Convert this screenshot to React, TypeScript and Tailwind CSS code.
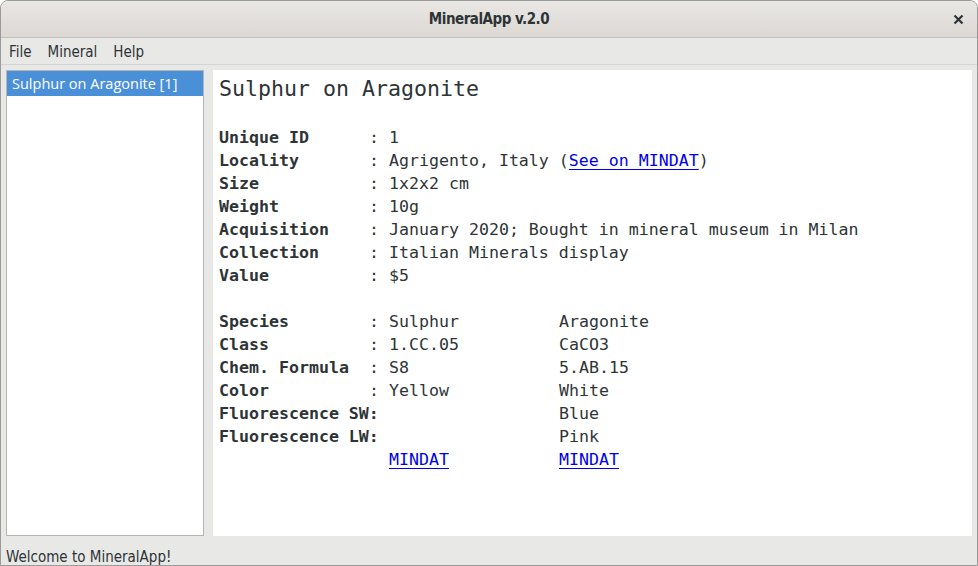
import React from "react";

const mono = { fontFamily: '"DejaVu Sans Mono", "Liberation Mono", monospace' };
const ui = { fontFamily: '"DejaVu Sans Condensed", "Liberation Sans Narrow", "Liberation Sans", sans-serif' };

type Row = { label: string; v1?: React.ReactNode; v2?: React.ReactNode; colon?: boolean };

function Line({ label, v1, v2, colon = true }: Row) {
  return (
    <div className="flex h-[23px] items-center whitespace-pre">
      <span className="w-[150px] shrink-0 font-bold">{label}</span>
      <span className="w-[20px] shrink-0">{colon ? ": " : ""}</span>
      <span className="w-[170px] shrink-0">{v1}</span>
      <span>{v2}</span>
    </div>
  );
}

function Info({ label, value }: { label: string; value: React.ReactNode }) {
  return (
    <div className="flex h-[23px] items-center whitespace-pre">
      <span className="w-[150px] shrink-0 font-bold">{label}</span>
      <span className="w-[20px] shrink-0">: </span>
      <span>{value}</span>
    </div>
  );
}

const Link = ({ children }: { children: React.ReactNode }) => (
  <span className="text-[#0000ee] underline underline-offset-[3px]">{children}</span>
);

export default function App() {
  return (
    <div className="w-[978px] h-[566px] bg-white">
      <div className="w-[978px] h-[566px] flex flex-col bg-[#e8e8e7] border border-[#9a9a98] rounded-t-[8px] overflow-hidden">
        <div
          className="h-[37px] shrink-0 border-b border-[#c3bfbb] bg-gradient-to-b from-[#e9e7e4] to-[#dcd8d4] relative flex items-center justify-center text-[#2e3436]"
          style={ui}
        >
          <span className="text-[15px] font-semibold tracking-[-0.5px]">MineralApp v.2.0</span>
          <svg className="absolute right-[13px] top-[13px]" width="11" height="11" viewBox="0 0 11 11">
            <path d="M1.5 1.5 L9.5 9.5 M9.5 1.5 L1.5 9.5" stroke="#2e3436" strokeWidth="2.2" />
          </svg>
        </div>
        <div
          className="h-[27px] shrink-0 border-b border-[#d4d4d2] flex items-center pt-[2px] text-[15px] text-[#2e3436]"
          style={ui}
        >
          <span className="ml-[8px]">File</span>
          <span className="ml-[16px]">Mineral</span>
          <span className="ml-[16px]">Help</span>
        </div>
        <div className="flex-1 flex px-[5px] pt-[5px] gap-[9px] min-h-0">
          <div className="w-[198px] shrink-0 bg-white border border-[#b5b5b3]">
            <div
              className="h-[25px] bg-[#4a90d9] text-white text-[14.5px] flex items-center pl-[5px]"
              style={{ fontFamily: '"Open Sans", "DejaVu Sans", sans-serif' }}
            >
              Sulphur on Aragonite [1]
            </div>
          </div>
          <div className="flex-1 bg-white text-[16.6px] text-[#2e3436] pl-[6px]" style={mono}>
            <div className="text-[21.6px] h-[26px] mt-[6px] flex items-center">Sulphur on Aragonite</div>
            <div className="mt-[25px]">
              <Info label="Unique ID" value="1" />
              <Info
                label="Locality"
                value={
                  <>
                    Agrigento, Italy (<Link>See on MINDAT</Link>)
                  </>
                }
              />
              <Info label="Size" value="1x2x2 cm" />
              <Info label="Weight" value="10g" />
              <Info label="Acquisition" value="January 2020; Bought in mineral museum in Milan" />
              <Info label="Collection" value="Italian Minerals display" />
              <Info label="Value" value="$5" />
              <div className="h-[23px]" />
              <Line label="Species" v1="Sulphur" v2="Aragonite" />
              <Line label="Class" v1="1.CC.05" v2="CaCO3" />
              <Line label="Chem. Formula" v1="S8" v2="5.AB.15" />
              <Line label="Color" v1="Yellow" v2="White" />
              <div className="flex h-[23px] items-center whitespace-pre">
                <span className="w-[170px] shrink-0 font-bold">Fluorescence SW:</span>
                <span className="w-[170px] shrink-0"></span>
                <span>Blue</span>
              </div>
              <div className="flex h-[23px] items-center whitespace-pre">
                <span className="w-[170px] shrink-0 font-bold">Fluorescence LW:</span>
                <span className="w-[170px] shrink-0"></span>
                <span>Pink</span>
              </div>
              <Line label="" colon={false} v1={<Link>MINDAT</Link>} v2={<Link>MINDAT</Link>} />
            </div>
          </div>
        </div>
        <div className="h-[29px] shrink-0 flex items-center pt-[14px] pl-[5px] text-[15px] text-[#2e3436]" style={ui}>
          Welcome to MineralApp!
        </div>
      </div>
    </div>
  );
}
